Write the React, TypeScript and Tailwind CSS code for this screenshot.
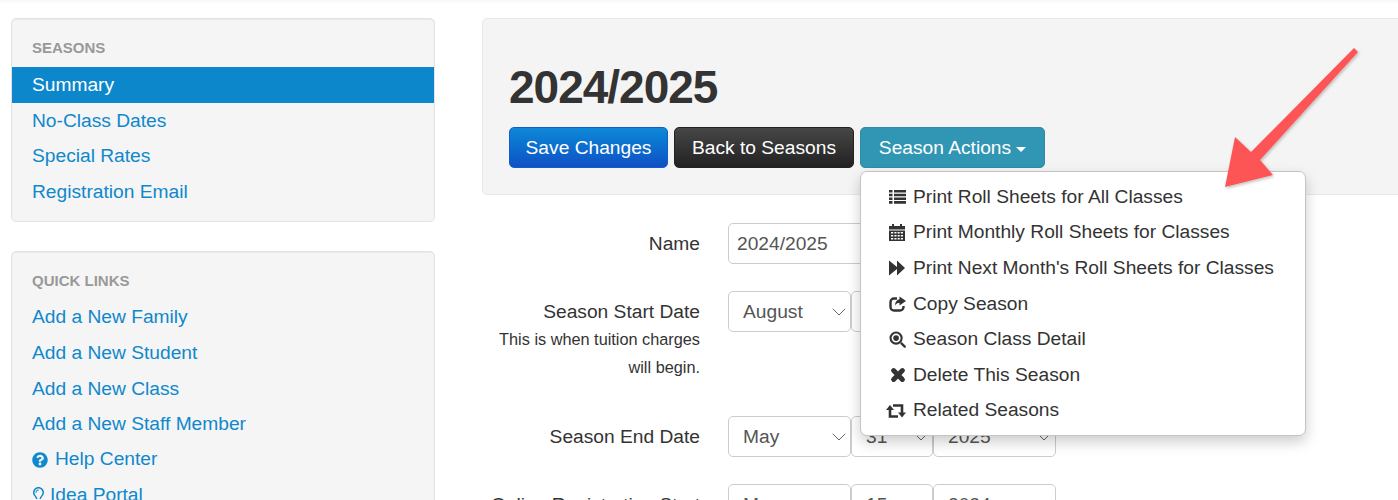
import { FaQuestionCircle, FaRegLightbulb } from "react-icons/fa";
import { ChevronDown } from "lucide-react";

const seasonLinks = ["Summary", "No-Class Dates", "Special Rates", "Registration Email"];
const quickLinks = ["Add a New Family", "Add a New Student", "Add a New Class", "Add a New Staff Member"];

function ListIcon() {
  return (
    <svg viewBox="0 0 17 16" className="h-[16px] w-[17px]" fill="currentColor">
      <path d="M0 1h3.5v2.6H0zM5 1h12v2.6H5zM0 4.7h3.5v2.6H0zM5 4.7h12v2.6H5zM0 8.4h3.5V11H0zM5 8.4h12V11H5zM0 12.1h3.5v2.6H0zM5 12.1h12v2.6H5z" />
    </svg>
  );
}

function CalendarIcon() {
  return (
    <svg viewBox="0 0 16 17" className="h-[17px] w-[16px]" fill="currentColor">
      <path d="M3 0h2v2h6V0h2v2h3v3.5H0V2h3z" />
      <path fillRule="evenodd" d="M0 6.5h16V17H0zM2 8v1.6h2.2V8zm3.4 0v1.6h2.1V8zm3.2 0v1.6h2.1V8zm3.2 0v1.6H14V8zM2 11v1.6h2.2V11zm3.4 0v1.6h2.1V11zm3.2 0v1.6h2.1V11zm3.2 0v1.6H14V11zM2 14v1.6h2.2V14zm3.4 0v1.6h2.1V14zm3.2 0v1.6h2.1V14zm3.2 0v1.6H14V14z" />
    </svg>
  );
}

function ForwardIcon() {
  return (
    <svg viewBox="0 0 16 16" className="h-[16px] w-[16px]" fill="currentColor">
      <path d="M0 0.5L8 7V0.5L16 8L8 15.5V9L0 15.5Z" />
    </svg>
  );
}

function ShareIcon() {
  return (
    <svg viewBox="0 0 18 16" className="h-[16px] w-[18px]">
      <path d="M8 2.5H5A3.5 3.5 0 0 0 1.5 6v5A3.5 3.5 0 0 0 5 14.5h6a3.5 3.5 0 0 0 3.5-3.5v-1" fill="none" stroke="currentColor" strokeWidth="2.4" />
      <path d="M10.5 0.5L17 5L10.5 9.5V7C8.5 7 7.2 7.6 6 9.5C6.2 6 8 3.4 10.5 3.2Z" fill="currentColor" />
    </svg>
  );
}

function SearchIcon() {
  return (
    <svg viewBox="0 0 18 18" className="h-[17px] w-[17px]" fill="currentColor">
      <path d="M7.5 0.5a7 7 0 1 1 0 14a7 7 0 0 1 0-14zm0 2.2a4.8 4.8 0 1 0 0 9.6a4.8 4.8 0 0 0 0-9.6z" />
      <circle cx="7.5" cy="7.5" r="3" />
      <path d="M11.8 13.4l1.7-1.7l4 4a1.2 1.2 0 0 1-1.7 1.7z" />
    </svg>
  );
}

function CrossIcon() {
  return (
    <svg viewBox="0 0 16 16" className="ml-[1px] h-[16px] w-[16px]">
      <path d="M3.6 3.6L12.4 12.4M12.4 3.6L3.6 12.4" fill="none" stroke="currentColor" strokeWidth="5" strokeLinecap="round" />
    </svg>
  );
}

function RelatedIcon() {
  return (
    <svg viewBox="0 0 20 14" className="-ml-[3px] h-[14px] w-[20px]" fill="none">
      <path d="M4 5V12.5H12" stroke="currentColor" strokeWidth="2.6" />
      <path d="M0 6L4 1L8 6Z" fill="currentColor" />
      <path d="M7 1.5H16V9" stroke="currentColor" strokeWidth="2.6" />
      <path d="M12 8.5H20L16 13.5Z" fill="currentColor" />
    </svg>
  );
}

const menuItems = [
  { label: "Print Roll Sheets for All Classes", icon: <ListIcon /> },
  { label: "Print Monthly Roll Sheets for Classes", icon: <CalendarIcon /> },
  { label: "Print Next Month's Roll Sheets for Classes", icon: <ForwardIcon /> },
  { label: "Copy Season", icon: <ShareIcon /> },
  { label: "Season Class Detail", icon: <SearchIcon /> },
  { label: "Delete This Season", icon: <CrossIcon /> },
  { label: "Related Seasons", icon: <RelatedIcon /> },
];

function DateSelect({ value, className }: { value: string; className: string }) {
  return (
    <div className={`relative h-[41px] ${className}`}>
      <select
        defaultValue={value}
        className="h-full w-full appearance-none rounded-[5px] border border-[#cccccc] bg-white pl-[14px] pt-[2px] text-[19.2px] text-[#555555]"
      >
        <option>{value}</option>
      </select>
      <ChevronDown className="pointer-events-none absolute right-0 top-[9px] h-[24px] w-[24px] text-[#666666]" strokeWidth={1} />
    </div>
  );
}

function DateRow({ month, day, year }: { month: string; day: string; year: string }) {
  return (
    <div className="flex">
      <DateSelect value={month} className="w-[123px]" />
      <DateSelect value={day} className="w-[82px]" />
      <DateSelect value={year} className="w-[123px]" />
    </div>
  );
}

function Label({ children }: { children: React.ReactNode }) {
  return <div className="pt-[9px] text-right text-[19.2px] leading-[23px] text-[#333333]">{children}</div>;
}

export default function App() {
  return (
    <div
      className="relative h-[500px] overflow-hidden bg-white bg-gradient-to-b from-[#f6f6f6] to-white bg-[length:100%_4px] bg-no-repeat"
      style={{ fontFamily: '"Liberation Sans", Arial, sans-serif' }}
    >
      <div className="flex items-start pl-[11px] pt-[18px]">
        {/* Sidebar */}
        <aside className="w-[424px] shrink-0">
          <div className="rounded-[5px] border border-[#e3e3e3] bg-[#f5f5f5] pb-[12px] shadow-[inset_0_1px_1px_rgba(0,0,0,0.05)]">
            <div className="pb-[9px] pl-[20px] pt-[19px] text-[15px] font-bold uppercase leading-[20px] text-[#999999]">Seasons</div>
            {seasonLinks.map((link, i) => (
              <div
                key={link}
                className={`h-[35.6px] pl-[20px] text-[19.2px] leading-[35.6px] ${i === 0 ? "bg-[#0d87cc] text-white" : "text-[#0f88cc]"}`}
              >
                {link}
              </div>
            ))}
          </div>
          <div className="mt-[29px] rounded-[5px] border border-[#e3e3e3] bg-[#f5f5f5] pb-[12px] shadow-[inset_0_1px_1px_rgba(0,0,0,0.05)]">
            <div className="pb-[8px] pl-[20px] pt-[19px] text-[15px] font-bold uppercase leading-[20px] text-[#999999]">Quick Links</div>
            {quickLinks.map((link) => (
              <div key={link} className="h-[35.6px] pl-[20px] text-[19.2px] leading-[35.6px] text-[#0f88cc]">
                {link}
              </div>
            ))}
            <div className="flex h-[35.6px] items-center gap-[7px] pl-[20px] text-[19.2px] text-[#0f88cc]">
              <FaQuestionCircle className="h-[16px] w-[16px]" />
              Help Center
            </div>
            <div className="flex h-[35.6px] items-center gap-[6px] pl-[21px] text-[19.2px] text-[#0f88cc]">
              <FaRegLightbulb className="h-[16px] w-[11px]" />
              Idea Portal
            </div>
          </div>
        </aside>

        {/* Main column */}
        <main className="ml-[47px] w-[960px] shrink-0">
          <section className="h-[177px] rounded-[5px] border border-[#e8e8e8] bg-[#f4f4f4] pl-[26px] pt-[43px]">
            <h1 className="text-[46px] font-bold leading-[50px] tracking-[-1px] text-[#333333]">2024/2025</h1>
            <div className="mt-[15px] flex gap-[6px] text-[19.2px] text-white">
              <button className="h-[41px] w-[159px] rounded-[5px] border border-[#0f5ecb] bg-gradient-to-b from-[#0f88d8] to-[#1150c4] pt-[1px]">Save Changes</button>
              <button className="h-[41px] w-[180px] rounded-[5px] border border-[#222222] bg-gradient-to-b from-[#474747] to-[#222222] pt-[1px]">Back to Seasons</button>
              <button className="flex h-[41px] w-[185px] items-center justify-center gap-[5px] rounded-[5px] border border-[#2f8ca8] bg-[#3096b4] pt-[1px]">
                Season Actions
                <span className="mt-[2px] h-0 w-0 border-x-[5px] border-t-[5px] border-x-transparent border-t-white" />
              </button>
            </div>
          </section>

          <div className="mt-[28px] grid grid-cols-[218px_1fr] gap-x-[28px]">
            <Label>Name</Label>
            <input
              defaultValue="2024/2025"
              className="h-[41px] w-[328px] rounded-[5px] border border-[#cccccc] bg-white pl-[8px] text-[19.2px] text-[#555555]"
            />

            <div className="mt-[27px] pb-[8px]">
              <Label>Season Start Date</Label>
              <p className="pt-[2px] text-right text-[16.3px] leading-[28px] text-[#333333]">
                This is when tuition charges
                <br />
                will begin.
              </p>
            </div>
            <div className="mt-[27px]">
              <DateRow month="August" day="1" year="2024" />
            </div>

            <div className="mt-[27px]">
              <Label>Season End Date</Label>
            </div>
            <div className="mt-[27px]">
              <DateRow month="May" day="31" year="2025" />
            </div>

            <div className="mt-[27px]">
              <Label>Online Registration Start</Label>
            </div>
            <div className="mt-[27px]">
              <DateRow month="May" day="15" year="2024" />
            </div>
          </div>
        </main>
      </div>

      {/* Open menu over the form */}
      <ul className="absolute left-[860px] top-[171px] w-[446px] rounded-[7px] border border-[#c4c4c4] bg-white pb-[6.5px] pt-[7.5px] text-[19.2px] text-[#333333] shadow-[0_6px_14px_rgba(0,0,0,0.2)]">
        {menuItems.map((item) => (
          <li key={item.label} className="flex h-[35.6px] items-center pl-[28px]">
            <span className="flex w-[24px] shrink-0 items-center">{item.icon}</span>
            {item.label}
          </li>
        ))}
      </ul>

      {/* Annotation arrow */}
      <svg className="pointer-events-none absolute left-[1215px] top-[40px]" width="150" height="155" viewBox="0 0 150 155">
        <defs>
          <filter id="arrowShadow" x="-20%" y="-20%" width="140%" height="140%">
            <feDropShadow dx="1" dy="1.5" stdDeviation="1.5" floodColor="#000000" floodOpacity="0.25" />
          </filter>
        </defs>
        <path d="M139 8 L143 12 L45 120 L58 135 L10 147 L20 97 L36 112 Z" fill="#fd5457" filter="url(#arrowShadow)" />
      </svg>
    </div>
  );
}
